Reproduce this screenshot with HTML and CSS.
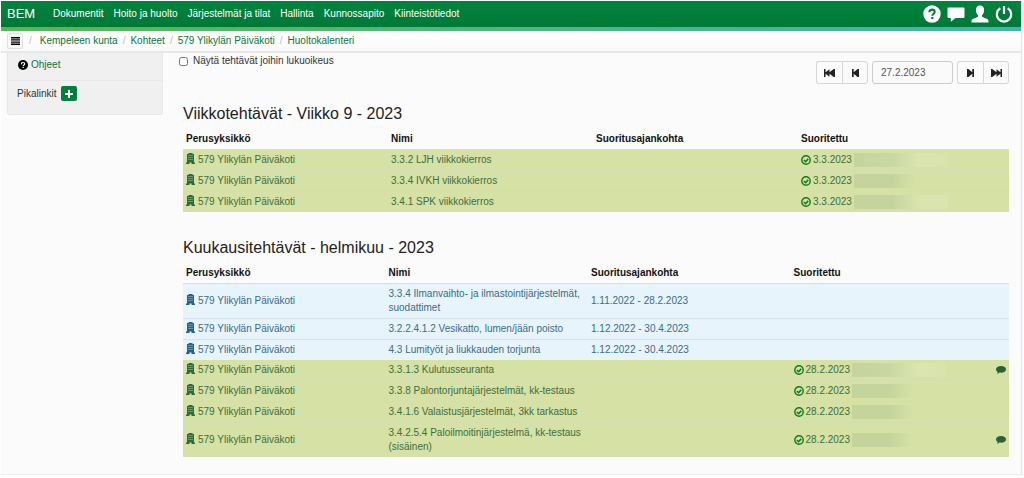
FILE: index.html
```html
<!DOCTYPE html>
<html lang="fi">
<head>
<meta charset="utf-8">
<title>BEM - Huoltokalenteri</title>
<link rel="stylesheet" href="styles.css">
</head>
<body>
<svg class="sprite" aria-hidden="true">
  <symbol id="building" viewBox="0 0 9 11"><path d="M2.500 0h4v1H8v8.500h1V11H5.500V9.500h-2V11H0V9.500h1V1h1.500z"/><path d="M2 2.500h5M2 4.500h5M2 6.500h5" fill="none" stroke="#fff" stroke-opacity=".3" stroke-width="1"/></symbol>
  <symbol id="check" viewBox="0 0 10 10"><circle cx="5" cy="5" r="4.200" fill="none" stroke="currentColor" stroke-width="1.400"/><path d="M2.900 5 4.600 6.700 7.200 3.900" fill="none" stroke="currentColor" stroke-width="1.600"/></symbol>
  <symbol id="comment" viewBox="0 0 10 8"><path d="M5 0c3 0 5 1.300 5 3.300S8 6.700 5 6.700c-.5 0-1 0-1.400-.1C2.900 7.300 2 7.800.8 7.900c.6-.6.900-1.200.9-1.900C.6 5.300 0 4.400 0 3.300 0 1.300 2 0 5 0z"/></symbol>
  <symbol id="step" viewBox="0 0 7 8"><path d="M0 0h1.700v3.200L5.500 0H7v8H5.500L1.700 4.800V8H0z"/></symbol>
  <symbol id="fast" viewBox="0 0 11 8"><path d="M0 0h1.500v3.300L5.500.3v3L9.700 0H11v8H9.700L5.500 4.700v3l-4-3V8H0z"/></symbol>
</svg>
<div class="page">
  <header class="navbar">
    <a class="brand" href="#">BEM</a>
    <nav class="menu">
      <a href="#">Dokumentit</a>
      <a href="#">Hoito ja huolto</a>
      <a href="#">Järjestelmät ja tilat</a>
      <a href="#">Hallinta</a>
      <a href="#">Kunnossapito</a>
      <a href="#">Kiinteistötiedot</a>
    </nav>
    <div class="tools">
      <button type="button" aria-label="Ohje"><svg width="18" height="18" viewBox="0 0 18 18"><circle cx="9" cy="9" r="8.700" fill="#fff"/><path d="M6.300 7.200C6.300 5.400 7.400 4.600 9 4.600s2.700.9 2.700 2.300c0 1.800-2.400 2-2.400 3.900" fill="none" stroke="#00803b" stroke-width="2.100"/><path d="M8.200 11.900h2.200V14H8.200z" fill="#00803b"/></svg></button>
      <button type="button" aria-label="Viestit"><svg width="18" height="18" viewBox="0 0 18 18"><path d="M1.500 2.500h15q1 0 1 1v8.500q0 1-1 1H8.300L3.800 17v-4H1.500q-1 0-1-1V3.500q0-1 1-1z" fill="#fff"/></svg></button>
      <button type="button" aria-label="Käyttäjä"><svg width="18" height="18" viewBox="0 0 18 18"><path d="M9 .5c2.600 0 4.100 1.800 4.100 4.500 0 2.300-.8 4.200-2.100 5.200v1.500l5.200 2.300q1.300.6 1.300 1.900v1.600H.5v-1.600q0-1.300 1.300-1.900L7 11.700v-1.500C5.700 9.200 4.900 7.300 4.900 5 4.900 2.300 6.400.5 9 .5z" fill="#fff"/></svg></button>
      <button type="button" aria-label="Kirjaudu ulos"><svg width="18" height="18" viewBox="0 0 18 18"><path d="M5.300 3.200a7.200 7.200 0 1 0 7.400 0" fill="none" stroke="#fff" stroke-width="2.200"/><path d="M7.900 1h2.200v8H7.900z" fill="#fff"/></svg></button>
    </div>
  </header>
  <div class="stripe"></div>
  <nav class="crumbs" aria-label="Murupolku">
    <button type="button" class="toggle" aria-label="Valikko"><svg width="9" height="8" viewBox="0 0 9 8"><path d="M0 0h9v1.400H0zM0 2.200h9v1.400H0zM0 4.400h9v1.400H0zM0 6.600h9V8H0z"/></svg></button>
    <ol>
      <li><a href="#">Kempeleen kunta</a></li>
      <li><a href="#">Kohteet</a></li>
      <li><a href="#">579 Ylikylän Päiväkoti</a></li>
      <li><a href="#">Huoltokalenteri</a></li>
    </ol>
  </nav>
  <div class="body">
    <aside class="side">
      <div class="side-row"><svg width="10" height="10" viewBox="0 0 10 10"><circle cx="5" cy="5" r="5"/><path d="M3.300 4.200C3.300 3 4 2.500 5 2.500s1.700.5 1.700 1.400c0 1-1.500 1.100-1.500 2.100" fill="none" stroke="#fff" stroke-width="1.200"/><path d="M4.500 6.700h1.300v1.300H4.500z" fill="#fff"/></svg><a href="#">Ohjeet</a></div>
      <div class="side-row links"><span>Pikalinkit</span><button type="button" class="add" aria-label="Lisää pikalinkki"><svg width="8" height="8" viewBox="0 0 8 8"><path d="M3 0h2v3h3v2H5v3H3V5H0V3h3z" fill="#fff"/></svg></button></div>
    </aside>
    <main class="main">
      <div class="controls">
        <label class="check"><input type="checkbox">Näytä tehtävät joihin lukuoikeus</label>
        <div class="pager">
          <div class="group">
            <button type="button" aria-label="Ensimmäinen"><svg width="11" height="8"><use href="#fast"/></svg></button>
            <button type="button" aria-label="Edellinen"><svg width="7" height="8"><use href="#step"/></svg></button>
          </div>
          <input type="text" class="date" value="27.2.2023" aria-label="Päivämäärä">
          <div class="group">
            <button type="button" aria-label="Seuraava"><svg class="flip" width="7" height="8"><use href="#step"/></svg></button>
            <button type="button" aria-label="Viimeinen"><svg class="flip" width="11" height="8"><use href="#fast"/></svg></button>
          </div>
        </div>
      </div>
      <section class="tasks">
        <h2>Viikkotehtävät - Viikko 9 - 2023</h2>
        <table class="weekly">
          <thead><tr><th>Perusyksikkö</th><th>Nimi</th><th>Suoritusajankohta</th><th>Suoritettu</th></tr></thead>
          <tbody>
            <tr class="done"><td><svg class="bld"><use href="#building"/></svg>579 Ylikylän Päiväkoti</td><td>3.3.2 LJH viikkokierros</td><td></td><td><div class="who"><svg class="ok"><use href="#check"/></svg>3.3.2023<span class="smudge light"></span></div></td></tr>
            <tr class="done"><td><svg class="bld"><use href="#building"/></svg>579 Ylikylän Päiväkoti</td><td>3.3.4 IVKH viikkokierros</td><td></td><td><div class="who"><svg class="ok"><use href="#check"/></svg>3.3.2023<span class="smudge"></span></div></td></tr>
            <tr class="done"><td><svg class="bld"><use href="#building"/></svg>579 Ylikylän Päiväkoti</td><td>3.4.1 SPK viikkokierros</td><td></td><td><div class="who"><svg class="ok"><use href="#check"/></svg>3.3.2023<span class="smudge low"></span></div></td></tr>
          </tbody>
        </table>
      </section>
      <section class="tasks">
        <h2>Kuukausitehtävät - helmikuu - 2023</h2>
        <table class="monthly">
          <thead><tr><th>Perusyksikkö</th><th>Nimi</th><th>Suoritusajankohta</th><th>Suoritettu</th><th></th></tr></thead>
          <tbody>
            <tr class="open"><td><svg class="bld"><use href="#building"/></svg>579 Ylikylän Päiväkoti</td><td>3.3.4 Ilmanvaihto- ja ilmastointijärjestelmät, suodattimet</td><td>1.11.2022 - 28.2.2023</td><td></td><td></td></tr>
            <tr class="open"><td><svg class="bld"><use href="#building"/></svg>579 Ylikylän Päiväkoti</td><td>3.2.2.4.1.2 Vesikatto, lumen/jään poisto</td><td>1.12.2022 - 30.4.2023</td><td></td><td></td></tr>
            <tr class="open"><td><svg class="bld"><use href="#building"/></svg>579 Ylikylän Päiväkoti</td><td>4.3 Lumityöt ja liukkauden torjunta</td><td>1.12.2022 - 30.4.2023</td><td></td><td></td></tr>
          </tbody>
          <tbody>
            <tr class="done"><td><svg class="bld"><use href="#building"/></svg>579 Ylikylän Päiväkoti</td><td>3.3.1.3 Kulutusseuranta</td><td></td><td><div class="who"><svg class="ok"><use href="#check"/></svg>28.2.2023<span class="smudge light"></span></div></td><td><svg class="note"><use href="#comment"/></svg></td></tr>
            <tr class="done"><td><svg class="bld"><use href="#building"/></svg>579 Ylikylän Päiväkoti</td><td>3.3.8 Palontorjuntajärjestelmät, kk-testaus</td><td></td><td><div class="who"><svg class="ok"><use href="#check"/></svg>28.2.2023<span class="smudge"></span></div></td><td></td></tr>
            <tr class="done"><td><svg class="bld"><use href="#building"/></svg>579 Ylikylän Päiväkoti</td><td>3.4.1.6 Valaistusjärjestelmät, 3kk tarkastus</td><td></td><td><div class="who"><svg class="ok"><use href="#check"/></svg>28.2.2023<span class="smudge"></span></div></td><td></td></tr>
            <tr class="done"><td><svg class="bld"><use href="#building"/></svg>579 Ylikylän Päiväkoti</td><td>3.4.2.5.4 Paloilmoitinjärjestelmä, kk-testaus (sisäinen)</td><td></td><td><div class="who"><svg class="ok"><use href="#check"/></svg>28.2.2023<span class="smudge"></span></div></td><td><svg class="note"><use href="#comment"/></svg></td></tr>
          </tbody>
        </table>
      </section>
    </main>
  </div>
</div>
</body>
</html>
```
FILE: styles.css
```css
* { box-sizing: border-box; }
body {
  margin: 0;
  padding: 1px 3px 0 1px;
  background: #fff;
  color: #333;
  font: 10px/14px "Liberation Sans", Arial, sans-serif;
}
button, input { font: inherit; color: inherit; margin: 0; }
button { display: flex; align-items: center; justify-content: center; padding: 0; border: 0; background: none; }
a { color: #08773c; text-decoration: none; }
svg { flex: none; }
.sprite { position: absolute; width: 0; height: 0; }
.page { background: #fbfbfb; border-bottom: 1px solid #ececec; box-shadow: 1px 0 1px #e4e4e4; }

.navbar {
  display: flex;
  align-items: center;
  height: 26px;
  padding: 0 8px 0 6px;
  background: linear-gradient(#00843d, #007837);
}
.navbar a { color: #fff; }
.navbar .brand { width: 46px; font-size: 13px; }
.menu { display: flex; gap: 10px; }
.tools { display: flex; gap: 6px; margin-left: auto; }
.stripe { height: 4px; background: linear-gradient(90deg, #55b94f, #4cb87c 50%, #3fb6b0); }

.crumbs {
  display: flex;
  align-items: center;
  height: 22px;
  padding-left: 6px;
  background: linear-gradient(#fff, #f9f9f9);
  border-bottom: 2px solid #e8e8e8;
}
.toggle { width: 16px; height: 16px; border: 1px solid #e0e0e0; border-radius: 2px; background: #f7f7f7; }
.crumbs ol { display: flex; margin: 0; padding: 0; list-style: none; }
.crumbs li::before { content: "/"; padding: 0 5px; color: #bbb; }
.crumbs li:first-child::before { padding: 0 8px 0 6px; }

.body { display: flex; align-items: flex-start; gap: 16px; padding: 0 12px 17px 6px; }
.side { flex: 0 0 156px; background: #f0f0f0; border: 1px solid #e7e7e7; border-top: 0; border-radius: 0 0 3px 3px; }
.side-row { display: flex; align-items: center; gap: 3px; padding: 4px 10px 8px; height: 27px; }
.links { gap: 5px; height: 34px; padding: 4px 9px 12px; border-top: 1px solid #e7e7e7; }
.add { width: 16px; height: 15px; border-radius: 2px; background: #00803b; }

.main { flex: 1; min-width: 0; }
.controls { display: flex; justify-content: space-between; align-items: flex-start; }
.check { display: flex; align-items: center; gap: 5px; padding-top: 1px; }
.check input { width: 9px; height: 9px; }
.pager { display: flex; gap: 4px; padding-top: 8px; }
.group { display: flex; }
.group button { width: 26px; height: 23px; border: 1px solid #d6d6d6; color: #222; }
.group button:first-child { border-radius: 3px 0 0 3px; border-right: 0; }
.group button:last-child { border-radius: 0 3px 3px 0; }
.group svg, .bld, .note { fill: currentColor; }
.flip { transform: scaleX(-1); }
.date { width: 81px; height: 23px; padding: 0 8px; border: 1px solid #ccc; border-radius: 3px; background: #fafafa; color: #555; }

.tasks { margin-left: 4px; padding-top: 20px; }
.tasks + .tasks { padding-top: 26px; }
h2 { margin: 0 0 6px; font-size: 16px; line-height: 20px; font-weight: 400; color: #222; }
table { width: 100%; table-layout: fixed; border-collapse: separate; border-spacing: 0; }
th { width: 205px; padding: 2px 3px 3px; text-align: left; color: #111; border-bottom: 1px solid #ddd; }
td { padding: 3px; vertical-align: middle; border-bottom: 1px solid #d7ddd0; }
tbody tr:last-child td { border-bottom: 0; }
.weekly th:last-child { width: auto; }
.monthly th { width: 25%; }
.monthly th:last-child { width: 16px; }
.done { background: #d6e1a6; color: #3c6e3c; }
.done td { border-color: #d4dcb4; }
.open { background: #e8f4fc; color: #3a6b88; }
.open td { border-color: #d3e1ea; }
.bld { width: 9px; height: 11px; margin-right: 3px; vertical-align: -1px; color: #2c6c3a; }
.open .bld { color: #28628a; }
.who { display: flex; align-items: center; gap: 2px; height: 14px; }
.ok { width: 10px; height: 10px; color: #117a1c; }
.note { display: block; width: 10px; height: 8px; color: #2b6235; }
.smudge { width: 94px; height: 14px; background: linear-gradient(90deg, #c5d49d, #c5d49d 40%, #d6e1a6 65%); }
.light { background: linear-gradient(90deg, #c5d49d, #c9d7a2 40%, #dbe5b0 70%, #d9e3ac); }
.low { background: linear-gradient(90deg, #c5d49d, #c5d49d 40%, #dae4ae 70%); }
```
